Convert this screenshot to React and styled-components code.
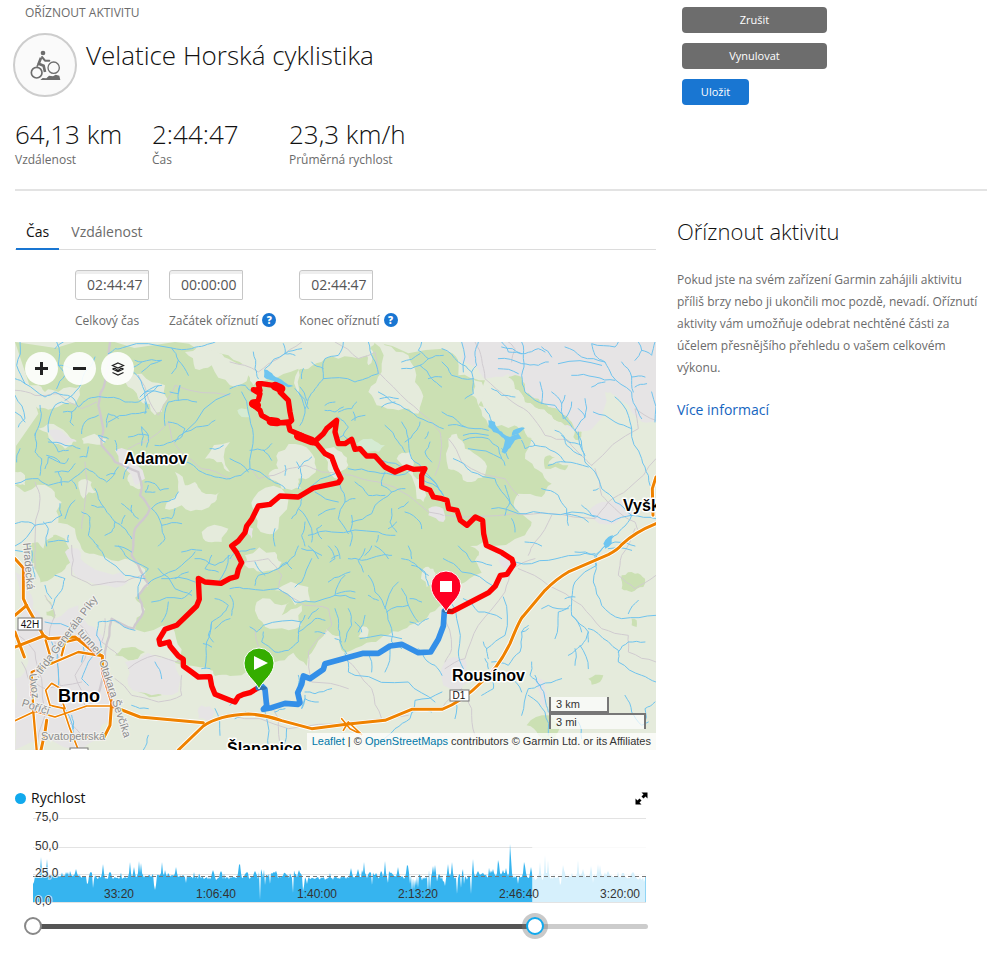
import { useState } from "react";
import styled, { createGlobalStyle } from "styled-components";

const GlobalStyle = createGlobalStyle`
  * { box-sizing: border-box; }
  body {
    margin: 0;
    background: #fff;
    color: #111;
    font-family: "Open Sans", "Noto Sans", sans-serif;
  }
  h1, h2, p, dl, dd { margin: 0; }
  button, input { font-family: inherit; }
`;

const Page = styled.div`
  padding: 4px 5px 12px 15px;
`;

const Columns = styled.div`
  display: grid;
  grid-template-columns: minmax(0, 1fr) 310px;
  column-gap: 21px;
`;

const Header = styled(Columns)`
  min-height: 187px;
  border-bottom: 2px solid #e3e3e3;
`;

const Eyebrow = styled.div`
  padding-left: 10px;
  font-size: 12px;
  line-height: 18px;
  color: #6b6b6b;
  text-transform: uppercase;
`;

const TitleRow = styled.div`
  display: flex;
  align-items: flex-start;
  gap: 9px;
  margin: 11px 0 0 -2px;
`;

const ActivityIcon = styled.span`
  display: grid;
  place-items: center;
  width: 64px;
  height: 64px;
  border: 2px solid #cdcdcd;
  border-radius: 50%;
  background: #fafafa;
  color: #6d6d6d;
`;

const Title = styled.h1`
  font-size: 26px;
  font-weight: 300;
  line-height: 36px;
  padding-top: 4px;
`;

const Stats = styled.dl`
  display: grid;
  grid-template-columns: repeat(3, 137px);
  margin-top: 19px;
`;

const Stat = styled.div`
  display: flex;
  flex-direction: column-reverse;
  white-space: nowrap;
  dt {
    font-size: 12px;
    line-height: 16px;
    color: #6b6b6b;
  }
  dd {
    font-size: 26px;
    font-weight: 300;
    line-height: 36px;
  }
`;

const Actions = styled.div`
  display: flex;
  flex-direction: column;
  align-items: flex-start;
  gap: 10px;
  padding: 3px 0 0 5px;
`;

const ActionButton = styled.button`
  width: ${({ $wide }) => ($wide ? "145px" : "67px")};
  height: 26px;
  padding: 0 0 2px;
  border: 0;
  border-radius: 4px;
  background: ${({ $primary }) => ($primary ? "#1976d2" : "#6d6d6d")};
  color: #fff;
  font-size: 11px;
  cursor: pointer;
`;

const Body = styled(Columns)`
  padding-top: 23px;
`;

const Tabs = styled.div`
  display: flex;
  gap: 2px;
  height: 36px;
  padding-left: 1px;
  border-bottom: 1px solid #dcdcdc;
`;

const Tab = styled.button`
  height: 36px;
  padding: 0 10px;
  border: 0;
  border-bottom: 2px solid ${({ $active }) => ($active ? "#1976d2" : "transparent")};
  background: none;
  color: ${({ $active }) => ($active ? "#111" : "#6b6b6b")};
  font-size: 14px;
  cursor: pointer;
`;

const Fields = styled.div`
  display: flex;
  gap: 20px;
  padding: 20px 0 13px 60px;
`;

const Field = styled.div`
  display: flex;
  flex-direction: column;
  gap: 11px;
`;

const TimeInput = styled.input`
  width: 74px;
  height: 30px;
  padding: 0 0 2px 11px;
  border: 1px solid #c6c6c6;
  border-radius: 3px 1px 1px 3px;
  box-shadow: inset 0 3px 0 #eee;
  color: #555;
  font-size: 14px;
`;

const FieldLabel = styled.div`
  display: flex;
  align-items: center;
  gap: 4px;
  height: 18px;
  color: #6b6b6b;
  font-size: 12px;
`;

const HelpButton = styled.button`
  width: 14px;
  height: 14px;
  padding: 0;
  border: 0;
  border-radius: 50%;
  background: #1976d2;
  color: #fff;
  font-size: 10px;
  font-weight: 800;
  line-height: 14px;
  margin-right: 3px;
`;

const MapFrame = styled.div`
  position: relative;
  overflow: hidden;
  background: #e5ebdc;
  > svg {
    display: block;
    width: 100%;
    height: auto;
  }
`;

const MapControls = styled.div`
  position: absolute;
  top: 10px;
  left: 10px;
  display: flex;
  gap: 5px;
`;

const MapButton = styled.button`
  display: grid;
  place-items: center;
  width: 33px;
  height: 33px;
  padding: 0;
  border: 0;
  border-radius: 50%;
  background: rgba(255, 255, 255, 0.9);
  color: #222;
`;

const MapScale = styled.div`
  position: absolute;
  right: 10px;
  bottom: 21px;
  display: flex;
  flex-direction: column;
  width: 97px;
  font: 11px/14px "Liberation Sans", Arial, sans-serif;
  color: #333;
`;

const ScaleLine = styled.div`
  width: ${({ $width }) => $width}px;
  height: 16px;
  padding-left: 5px;
  border: 2px solid #777;
  border-${({ $open }) => $open}: 0;
  background: rgba(255, 255, 255, 0.7);
`;

const Attribution = styled.div`
  position: absolute;
  right: 0;
  bottom: 0;
  padding: 0 5px;
  background: rgba(255, 255, 255, 0.75);
  color: #333;
  font: 11px/17px "Liberation Sans", Arial, sans-serif;
  white-space: nowrap;
  a {
    color: #0078a8;
    text-decoration: none;
  }
`;

const ChartHeader = styled.div`
  display: flex;
  align-items: center;
  gap: 5px;
  margin-top: 40px;
  font-size: 14px;
  line-height: 16px;
`;

const Dot = styled.span`
  width: 11px;
  height: 11px;
  border-radius: 50%;
  background: #11a9ed;
`;

const ExpandButton = styled.button`
  display: flex;
  margin: 0 8px 0 auto;
  padding: 0;
  border: 0;
  background: none;
`;

const ChartSvg = styled.svg`
  display: block;
  width: 100%;
  height: auto;
  font: 12px "Liberation Sans", Arial, sans-serif;
  fill: #333;
`;

const RangeSlider = styled.div`
  display: grid;
  align-items: center;
  height: 34px;
  margin: 1px -1px 0 9px;
`;

const RangeTrack = styled.div`
  grid-area: 1 / 1;
  height: 5px;
  margin: 0 9px;
  border-radius: 3px;
`;

const RangeInput = styled.input`
  grid-area: 1 / 1;
  width: 100%;
  height: 18px;
  margin: 0;
  background: none;
  appearance: none;
  pointer-events: none;
  &::-webkit-slider-thumb {
    appearance: none;
    width: 18px;
    height: 18px;
    border: 2px solid ${({ $active }) => ($active ? "#11a9ed" : "#888")};
    border-radius: 50%;
    background: #fff;
    box-shadow: ${({ $active }) => ($active ? "0 0 0 4px rgba(120, 120, 120, 0.4)" : "none")};
    pointer-events: auto;
  }
`;

const Aside = styled.aside`
  h2 {
    font-size: 22px;
    font-weight: 300;
    line-height: 34px;
  }
  p {
    margin-top: 21px;
    color: #6b6b6b;
    font-size: 12px;
    line-height: 22px;
  }
  a {
    display: inline-block;
    margin-top: 20px;
    color: #1565c0;
    font-size: 14px;
    line-height: 22px;
    text-decoration: none;
  }
`;

// small repeatable random source, so the terrain and chart look the same on every render
function randomSource(seed) {
  let s = seed;
  return () => {
    s = (s * 16807) % 2147483647;
    return s / 2147483647;
  };
}

// breaks straight edges into uneven ones, the way land cover looks on a map
function rough(text, amount, closed) {
  let pts = text.trim().split(/\s+/).map((p) => p.split(",").map(Number));
  const rnd = randomSource(text.length * 97 + Math.abs(pts[0][0]) + 11);
  let spread = amount;
  for (let pass = 0; pass < 2; pass++) {
    const next = [];
    pts.forEach((p, i) => {
      next.push(p);
      const q = pts[i + 1] || (closed ? pts[0] : null);
      if (!q) return;
      const len = Math.hypot(q[0] - p[0], q[1] - p[1]);
      if (len < 14) return;
      const d = (rnd() - 0.5) * len * spread;
      next.push([
        (p[0] + q[0]) / 2 - ((q[1] - p[1]) / len) * d,
        (p[1] + q[1]) / 2 + ((q[0] - p[0]) / len) * d,
      ]);
    });
    pts = next;
    spread = amount * 0.9;
  }
  return "M" + pts.map(([x, y]) => `${Math.round(x)},${Math.round(y)}`).join("L") + (closed ? "Z" : "");
}

const forests = [
  "0,0 480,0 640,40 700,90 860,75 940,40 985,5 1060,30 1080,0 1285,20 1330,55 1345,90 1410,115 1390,170 1405,205 1430,235 1480,245 1525,255 1550,290 1530,350 1570,385 1610,425 1580,465 1510,455 1500,500 1550,540 1530,580 1410,612 1380,655 1400,692 1355,717 1325,742 1290,770 1245,812 1205,842 1165,862 1105,882 1055,902 990,932 975,882 935,862 890,932 875,972 835,932 775,962 645,1002 600,1002 580,977 480,962 500,922 470,852 360,862 390,802 360,767 400,732 390,682 330,650 250,640 200,620 180,560 90,510 60,450 0,430",
  "40,605 150,590 170,650 140,690 80,720 50,740 30,700",
  "1480,105 1520,105 1530,150 1570,170 1600,195 1640,215 1670,240 1680,262 1650,250 1610,220 1560,195 1530,180 1500,140",
  "1680,262 1700,270 1690,295 1675,285",
  "1820,700 1860,695 1890,710 1885,735 1850,750 1820,740",
  "1535,1150 1600,1120 1640,1150 1620,1190 1570,1180",
  "1720,1010 1765,1000 1755,1020 1730,1028",
  "1590,345 1620,345 1600,365 1660,370 1650,385 1590,380",
  "300,940 350,915 390,930 340,955",
  "350,1010 420,1030 440,1060 370,1050",
  "1850,830 1865,835 1865,855 1850,850",
  "1820,60 1860,65 1900,110 1870,100",
  "90,770 110,790 120,830 95,820",
  "20,850 70,890 40,900",
  "1765,130 1800,125 1855,165 1830,160",
  "1910,150 1923,150 1923,190 1912,190",
];

const clearings = [
  "510,30 600,25 640,50 760,40 860,5 1060,0 1075,30 1060,70 1055,40 1010,45 930,50 880,80 850,85 850,160 850,80 760,110 715,130 700,100 645,130 590,70 540,80",
  "0,130 60,130 90,150 130,150 200,130 180,185 110,200 70,200 0,160",
  "330,120 380,95 450,130 440,210 420,220 370,170",
  "1075,0 1110,10 1180,40 1200,120 1220,180 1210,215 1150,205 1085,190 1060,150 1100,90",
  "1285,0 1340,60 1370,160 1390,190 1440,230 1500,230 1520,250 1550,290 1530,260 1500,250 1420,250 1390,190 1400,120 1330,100",
  "70,260 130,255 185,295 150,320 110,300",
  "200,290 275,292 260,308 205,305",
  "480,390 510,430 540,420 560,450 615,450 600,480 560,505 500,490 450,500 470,470 490,450",
  "570,350 645,300 645,390 620,360",
  "340,400 375,400 380,440 345,430",
  "790,330 860,310 900,350 890,400 850,410 860,440 800,440 760,400 790,380",
  "715,470 800,440 790,560 755,575 720,520",
  "930,320 980,330 1000,370 970,410 950,400",
  "1145,350 1185,330 1195,400 1230,440 1225,480 1205,470",
  "1300,290 1325,275 1350,320 1400,350 1410,400 1370,420 1330,390 1300,380",
  "0,390 30,400 30,430 0,430",
  "190,420 230,420 245,450 205,470",
  "30,450 110,440 140,480 130,540 85,620 50,590",
  "780,745 880,735 885,780 840,790",
  "725,780 800,790 825,780 800,820 860,790 860,850 780,860 730,830",
  "690,640 780,630 800,660 740,690 690,670",
  "1035,860 1055,855 1055,890 1030,885",
  "1225,680 1255,680 1260,710 1235,735",
  "1365,612 1440,620 1480,650 1450,690 1400,660",
  "560,570 640,560 620,600 580,600",
  "0,590 30,620 120,800 40,780 0,720",
];

const towns = [
  "1340,0 1923,0 1923,240 1870,230 1800,160 1770,150 1740,250 1690,270 1630,215 1570,190 1520,150 1480,95 1410,110 1390,80 1340,60",
  "0,690 50,760 80,830 190,790 220,850 270,900 250,930 280,1000 300,1080 260,1150 200,1224 0,1224 0,1010 40,960 0,870",
  "330,960 470,950 500,1010 490,1050 410,1060 340,1030",
  "150,630 190,620 220,670 320,690 340,720 260,730 180,700",
  "100,265 170,290 185,300 150,310",
  "300,325 340,325 390,410 360,430 340,390",
  "1720,510 1780,480 1830,470 1860,520 1800,545 1740,535",
  "1290,960 1350,950 1370,1010 1330,1060 1285,1030",
  "1450,650 1490,640 1510,665 1470,680",
  "1560,1010 1590,1020 1590,1100 1575,1080",
  "690,560 715,560 710,590",
  "1240,500 1285,500 1285,540 1240,520",
  "560,1090 600,1110 590,1140 550,1130",
];

const grayRoads = [
  "285,0 270,120 250,190 265,260 260,310 300,360 370,390 380,430 375,460 405,500 360,560 355,612 350,640 385,700 400,725 370,760 385,810 355,860 290,830 270,930 240,1080",
  "0,145 60,160 130,155 200,200 245,180",
  "370,100 400,170 430,220 445,190 480,130 645,160",
  "340,320 390,300 460,240 470,290 500,330 560,380 645,410",
  "645,60 730,90 790,50 860,0",
  "960,0 1030,50 1080,30 1090,90 1180,180 1240,230 1275,270 1280,310 1260,400",
  "705,380 730,410 820,380 870,370 920,390 1010,400 1090,420 1180,460 1240,510 1285,520",
  "1380,0 1400,50 1410,110 1480,170 1540,210 1590,280 1660,295 1710,350 1730,370",
  "1923,350 1840,440 1780,480 1740,530 1610,515 1500,515 1290,520",
  "1730,370 1870,260 1860,200 1923,235",
  "1300,290 1340,360 1400,395 1470,410 1510,460",
  "60,420 75,470 60,600 60,680",
  "210,360 210,480 200,560",
  "170,610 170,700 230,730 330,720 380,700",
  "90,760 120,820 100,900",
  "270,830 260,900 310,940",
  "340,980 420,940 500,960 530,990",
  "300,1010 350,1060 430,1080 500,1060 500,1000",
  "645,650 690,660 760,650 800,700 790,740 870,790 940,800 950,850 880,930 890,1020 1000,1040",
  "720,860 730,980 740,1040 790,1130 800,1224",
  "990,950 1030,990 1070,1040 1100,1130",
  "1290,980 1350,950 1390,850 1470,750 1490,680 1560,650",
  "1510,680 1600,730 1700,790 1760,860 1840,880 1840,930 1923,960",
  "1480,0 1500,20 1490,60",
  "1285,810 1310,920 1290,960",
  "1280,1100 1340,1040 1370,1100 1380,1180",
  "645,1120 820,1160 1000,1140 1180,1120",
  "20,960 40,1010 90,1040 200,1020",
  "10,880 60,930 80,1010 90,1120 60,1224",
  "120,900 130,1000 140,1100 200,1180",
  "180,830 230,900 180,1000 210,1100",
  "1740,380 1760,460 1800,500 1860,540 1870,570",
  "1860,560 1820,640 1810,700 1860,740 1923,700",
  "1610,520 1560,600 1540,640",
];

const streams = [
  // north-west
  "0,110 30,125 90,165 120,150 170,165 190,195 220,170 260,165 330,180 370,180 430,130",
  "15,0 5,70 30,125", "125,0 130,70 150,100 125,140", "130,70 170,80 190,70", "120,20 145,0",
  "240,45 210,90 180,150 150,175", "330,15 300,20 280,35", "330,15 470,18 530,20 570,10 600,0",
  "470,18 490,55 520,100", "490,55 470,95", "380,60 360,55", "380,90 440,55 380,60 350,80",
  "355,90 390,150 400,200", "390,150 450,155", "375,165 440,130", "0,160 30,230 10,255", "0,210 30,240",
  "75,190 75,240 60,280", "100,270 120,190 140,180 160,185", "145,210 170,210 185,195", "170,210 165,240 175,250",
  "200,275 210,240 250,220", "275,255 280,215 310,230", "280,240 350,215 395,210", "390,180 390,215",
  "450,250 460,180 490,175 495,130 490,155 465,150", "490,175 545,180", "460,240 510,260 500,285 470,300 420,310",
  "480,300 510,270 580,250 600,235", "510,270 645,155", "340,285 400,280 380,255", "380,255 380,310", "400,280 395,315",
  "270,300 250,280 280,290", "100,300 150,310 195,320", "100,290 130,330 160,325", "195,345 215,345 220,315",
  "300,295 305,325", "5,360 15,320", "60,275 60,330 80,350 75,400", "95,340 135,360", "160,350 150,365 100,345 90,380",
  "120,390 160,390 180,365", "0,425 70,410 100,430 160,420 180,405 210,380", "130,390 140,430", "170,415 185,440",
  "215,380 250,405 275,420 310,375", "275,400 300,395", "325,410 340,375", "390,420 420,425 435,445 460,440",
  "410,500 440,480 480,470 490,450", "400,430 390,450 420,450", "240,440 250,470 270,500 300,540 330,560 350,590",
  "265,495 230,490", "300,540 290,570 270,580", "320,545 330,520", "370,530 350,510 320,485", "350,510 350,490",
  "200,510 225,525 220,580 250,612", "410,500 440,550 450,590 430,612", "440,530 470,530 480,500", "440,550 500,545",
  "0,545 40,540 60,550 110,540 140,520", "60,550 0,612", "95,612 100,560 85,540", "140,520 135,485", "150,530 180,475",
  "100,600 160,600 160,580", "585,320 600,322 625,310", "515,360 550,385 600,405 645,410",
  // north centre
  "715,30 720,80 730,110", "750,80 810,35 860,20", "805,5 810,35", "810,35 840,40", "645,140 690,130 710,150",
  "680,150 700,210 715,280 705,380 645,410", "705,325 750,325 770,305", "745,325 770,355", "705,380 760,410 800,430 810,440",
  "985,0 970,40 930,50 925,110 900,140 880,170 870,200 855,250", "925,80 890,60", "925,110 1020,120 1050,110 1090,95 1075,50 1060,0",
  "860,110 865,80", "840,140 870,200", "850,150 880,200", "855,135 875,175", "930,205 960,210 985,195", "930,190 960,180",
  "970,210 1010,200 1025,180", "1015,210 1020,235", "1010,235 1050,220", "970,225 1000,255 985,280 1030,320 1100,355 1180,380",
  "985,280 960,290", "1220,0 1210,25 1240,50 1215,70 1250,110 1280,135", "1215,35 1160,60", "1240,50 1285,40", "1215,70 1160,80", "1240,110 1280,105",
  "1090,150 1130,180 1180,205 1240,240 1285,260", "1095,170 1150,170", "1100,195 1140,180", "1110,250 1150,300 1170,330",
  "1160,240 1180,290 1190,350", "1215,240 1200,270 1170,300", "1240,270 1230,290", "1245,300 1230,330 1250,360",
  "1190,350 1230,390 1260,420 1285,460", "1190,385 1150,400 1080,390 1000,380", "1100,430 1130,450 1080,490 1070,515 1010,540",
  "1020,420 1060,460 1110,460", "1100,430 1110,390", "1130,450 1170,440", "845,360 860,400 850,440", "850,380 890,345", "880,440 960,395",
  "810,370 810,400", "645,350 700,390", "975,430 990,480 970,530 1000,575", "990,480 1020,470", "970,480 900,450", "910,520 960,500",
  "860,470 850,500 890,560 890,600", "850,500 830,530", "880,580 950,570 1090,570 1140,580", "920,590 905,560 920,550",
  "780,612 780,560", "870,540 860,580 870,612", "1010,520 1005,570", "1010,570 1005,612", "1130,500 1125,540 1145,570", "1090,580 1085,600",
  "1170,510 1215,540 1220,560", "1180,480 1150,500", "1230,400 1285,460", "1220,412 1280,450", "1145,540 1120,560",
  // north-east
  "1281,20 1330,60 1370,90 1375,155 1350,170", "1340,0 1345,90", "1281,60 1310,100 1375,110", "1370,90 1385,70 1380,30 1390,0",
  "1460,0 1480,30 1530,35 1570,20 1590,30", "1520,0 1525,50 1520,100 1530,150 1560,175 1620,190 1650,230 1680,265",
  "1450,50 1520,65 1570,70 1600,60", "1450,80 1510,95", "1580,15 1610,45", "1460,15 1520,35", "1430,140 1460,160 1500,165",
  "1575,120 1580,185", "1610,150 1640,185 1645,230", "1650,160 1640,185", "1670,180 1650,230", "1710,170 1710,225 1690,250 1680,265",
  "1690,200 1710,225", "1650,15 1700,45 1770,60 1790,100 1850,150 1870,210 1880,230", "1770,60 1740,40 1730,5 1800,15 1810,0",
  "1630,65 1760,70", "1670,100 1740,105 1800,115", "1730,135 1770,120", "1820,60 1850,105 1855,150", "1850,105 1890,105", "1860,135 1895,125",
  "1870,0 1880,25 1860,55", "1880,25 1910,40 1920,0", "1910,150 1920,240", "1800,165 1840,220 1850,260 1880,350 1900,400 1905,430",
  "1735,210 1800,240 1850,260", "1680,265 1700,310 1710,360 1740,390 1760,440 1800,480 1850,520 1923,530",
  "1620,265 1660,300 1700,310", "1640,280 1655,310 1700,340", "1560,310 1620,330 1650,360 1720,375", "1600,370 1650,360",
  "1710,340 1690,270", "1750,440 1735,445", "1550,295 1560,310 1530,320 1520,295", "1281,210 1340,250 1420,265", "1300,250 1350,255",
  "1345,280 1420,280", "1345,295 1420,290 1450,315 1460,350", "1360,320 1460,350 1470,370", "1460,320 1480,350",
  "1315,350 1370,390 1440,410 1470,460 1510,510", "1410,200 1430,240", "1580,440 1630,460 1655,500 1660,550", "1430,500 1510,515 1600,515 1740,525",
  "1490,530 1500,570", "1470,520 1485,480 1470,430", "1650,515 1720,540", "1700,490 1730,520 1790,540 1850,520", "1530,600 1580,612",
  "1850,520 1820,560 1790,590 1770,612 1745,640 1745,670 1680,720 1670,770 1670,820 1720,870 1720,900",
  // south-west
  "45,612 50,660 60,710", "0,625 45,640", "110,800 140,745 150,710 120,700", "110,770 90,730", "370,770 380,700 400,680 330,640 310,612",
  "400,725 420,710 500,670 540,630", "360,865 300,835 250,840 245,880", "90,840 180,865", "245,880 260,920 220,960 200,1010 220,1030", "205,900 200,960",
  "245,612 270,650 330,700 390,710", "300,612 350,630", "430,680 480,740 530,760", "440,710 540,720", "410,780 500,770 530,745", "460,780 440,840",
  "480,710 520,690", "540,650 600,670 645,640", "500,630 560,625", "590,640 570,680 610,690", "640,640 610,720",
  "600,770 640,790 620,820 590,840 575,900 570,980", "590,840 580,880 595,900", "565,905 590,915", "560,980 585,980", "600,860 645,830",
  "110,900 130,980 150,1100 180,1200", "420,960 440,1010", "400,1100 350,1090", "600,1100 615,1180", "400,1180 385,1224", "170,1120 175,1160",
  // south centre
  "645,650 665,630 720,620", "645,740 700,740 790,740 840,780 900,780 960,760 1020,770", "720,730 730,700 790,680 840,640 850,612",
  "790,680 815,660 830,680", "750,700 720,660", "840,735 860,720 890,650", "645,760 655,790 650,820", "940,720 980,700 1005,690",
  "960,760 990,700", "965,755 1020,750", "860,620 920,640", "880,612 910,650", "940,612 960,650 945,660", "950,650 970,640", "960,612 975,650",
  "1000,650 1040,655 1100,640 1130,640", "1050,620 1030,655 1045,690", "1070,612 1050,640", "1080,612 1120,650",
  "1060,700 1080,750 1115,805 1130,860 1130,900 1160,920", "1110,800 1150,720", "1090,775 1060,760", "1115,810 1180,790",
  "1160,650 1200,665 1240,700", "1180,612 1190,650", "1190,670 1230,690 1240,730", "1160,740 1180,790 1210,840", "1185,770 1220,780", "1185,840 1210,850 1240,830",
  "1035,890 1160,890", "960,800 970,860 975,900 995,935", "1000,800 1010,850 990,900", "960,890 980,900", "1050,820 1030,870", "1020,840 1040,870",
  "990,935 1000,990 1020,1000 1180,1020 1260,1080", "705,855 725,870 745,850 860,840", "745,870 740,900 780,930 820,925 850,900 850,870 900,830 930,835",
  "900,870 930,875", "880,830 910,800", "850,870 870,820", "1060,930 1070,990", "1125,920 1110,990", "1210,920 1230,950 1260,970 1281,1000",
  "870,1050 900,1055 950,1040", "870,1060 860,1100 870,1070 910,1080", "745,1030 750,1110 760,1224", "690,1110 660,1130", "645,1090 690,1060",
  "850,1000 850,1030", "1281,1050 1200,1075 1185,1130 1140,1160 1100,1200", "1190,1110 1250,1110", "780,1110 810,1100", "815,1160 805,1210",
  // south-east
  "1285,650 1340,690 1440,735 1455,705", "1330,612 1370,660 1430,670", "1300,770 1325,830 1330,930 1345,980", "1345,770 1390,810 1460,830",
  "1465,765 1470,880 1415,920 1420,950", "1460,640 1500,660 1600,655 1680,640 1740,635", "1680,630 1740,640 1800,600 1860,612", "1740,640 1735,720 1760,790 1820,830 1923,820",
  "1840,815 1870,775", "1780,620 1850,625", "1650,770 1680,765", "1665,790 1630,810 1620,890", "1660,800 1600,790 1580,800",
  "1720,870 1700,910 1660,940", "1680,920 1680,970", "1695,910 1720,980", "1720,860 1750,875 1810,925 1810,960 1880,1000 1923,1020",
  "1810,930 1840,900 1890,900", "1670,820 1700,870", "1540,860 1520,870 1515,930 1480,970 1430,960", "1520,870 1540,850",
  "1415,920 1405,900", "1410,950 1420,980", "1550,960 1545,1000 1575,1030 1640,1010", "1575,1030 1540,1040 1520,1120", "1575,1030 1560,1000",
  "1575,1030 1590,1070 1600,1110", "1540,1060 1590,1110 1600,1180", "1480,1000 1520,1050", "1430,1010 1435,1040 1400,1060",
  "1320,1060 1320,1130", "1830,1060 1850,1110 1880,1150 1900,1140", "1690,1140 1700,1190", "1920,1080 1890,1100 1890,1150",
];

const lakes = [
  "747,82 765,90 775,100 790,108 808,120 820,128 835,132 820,136 790,125 760,112 747,105",
  "1420,235 1440,240 1445,255 1465,275 1485,285 1510,275 1520,290 1500,295 1490,310 1470,335 1460,330 1470,295 1450,275 1435,270 1420,255",
  "1490,282 1495,265 1530,258 1510,275",
  "1780,585 1795,580 1790,605 1770,620 1765,605",
];

const highways = [
  { w: 9, d: "M0,650 L25,678 L25,770 L35,792 L85,880 L100,890 L180,885 L230,925 L262,942 L262,990 L290,1080 L285,1150 L265,1190 L230,1188 L175,1182" },
  { w: 9, d: "M0,820 L35,790 M0,915 L85,882 M0,870 L28,945" },
  { w: 7, d: "M262,942 L190,930 L50,990 L55,1110 L65,1224 M92,895 L105,940 L110,965 M140,940 L150,900 L195,890" },
  { w: 5, d: "M50,1005 L48,1060 M110,1024 L138,1040 L135,1060 L150,1100 L105,1090 L92,1045 L110,1024 M145,1100 L165,1160 L190,1224 M0,1136 L60,1108 L120,1125 L215,1092 L290,1092" },
  { w: 9, d: "M290,1092 L375,1125 L565,1142 M95,1135 L90,1170 L78,1224" },
  { w: 9, d: "M490,1224 L565,1152 Q610,1120 700,1116 Q750,1118 800,1136 L890,1160 L1000,1146 L1110,1135 L1190,1102 L1281,1102 Q1340,1080 1400,1020 Q1445,985 1485,905 Q1515,830 1525,822 L1590,745 Q1625,710 1660,690 L1780,638 Q1810,622 1820,608 Q1860,570 1923,545" },
  { w: 5, d: "M980,1130 L1005,1160 L1035,1175 M985,1165 L1000,1140 L1040,1178" },
  { w: 9, d: "M1923,405 L1912,440 L1914,520" },
];

const trimmedRoute =
  "M730,1037 L705,1052 L685,1057 L670,1064 L660,1080 L645,1075 L600,1057 L590,1032 L585,1004 L550,1005 L530,990 L505,972 L505,952 L490,942 L465,912 L462,900 L435,907 L432,892 L450,862 L485,850 L545,792 L553,772 L550,709 L570,720 L618,724 L645,709 L665,704 L670,682 L680,662 L665,632 L650,612 L670,597 L690,572 L695,552 L710,532 L730,492 L765,487 L795,462 L850,465 L895,438 L970,422 L978,410 L963,380 L950,345 L930,335 L905,305 L880,295 L860,280 L825,265 L820,245 L830,235 L825,210 L820,175 L795,150 L795,135 L775,130 L740,125 L730,125 L735,145 L715,143 L735,155 L730,175 L710,185 L735,205 L740,220 L775,240 L790,243 L820,240 M895,302 L925,275 L935,260 L965,235 L960,270 L970,305 L990,305 L1010,292 L1020,322 L1035,320 L1055,342 L1080,342 L1110,375 L1140,390 L1175,375 L1195,382 L1230,380 L1220,400 L1220,435 L1245,445 L1255,465 L1281,470 L1296,475 L1301,500 L1326,505 L1336,535 L1356,550 L1381,525 L1403,535 L1406,575 L1414,610 L1461,632 L1491,652 L1496,667 L1476,697 L1456,700 L1441,732 L1421,752 L1311,809 L1290,807";

const keptRoute =
  "M1288,807 L1285,852 L1270,892 L1247,930 L1210,932 L1160,907 L1125,912 L1090,934 L1045,934 L930,965 L925,982 L885,1010 L865,1002 L860,1027 L848,1052 L855,1082 L850,1087 L810,1084 L770,1097 L745,1102 L755,1092 L750,1042 L740,1032 L730,1037";

const streetNames = [
  { x: 8, y: 201, turn: 85, name: "Hradecká" },
  { x: 26, y: 333, turn: -53, name: "třída Generála Píky" },
  { x: 62, y: 291, turn: 48, name: "tunnel" },
  { x: 84, y: 319, turn: 72, name: "Otakara Ševčíka" },
  { x: 14, y: 332, turn: 83, name: "Úvoz" },
  { x: 6, y: 364, turn: 18, name: "Poříčí" },
  { x: 26, y: 398, turn: 0, name: "Svatopetrská" },
];

const cities = [
  { x: 109, y: 122, size: 16, name: "Adamov" },
  { x: 43, y: 360, size: 18, name: "Brno" },
  { x: 437, y: 339, size: 16, name: "Rousínov" },
  { x: 608, y: 169, size: 16, name: "Vyškov" },
  { x: 212, y: 412, size: 16, name: "Šlapanice" },
];

const Pin = ({ x, y, color, children }) => (
  <g transform={`translate(${x} ${y})`}>
    <ellipse cx="2" cy="24" rx="6" ry="2" fill="#333" opacity="0.3" />
    <path
      d="M0,25 C-4,16 -15,11 -15,-1 A15,15 0 0 1 15,-1 C15,11 4,16 0,25Z"
      fill={color}
      stroke="#fff"
      strokeWidth="1"
    />
    {children}
  </g>
);

const TerrainMap = () => (
  <svg viewBox="0 0 641 408" role="img" aria-label="Mapa aktivity">
    <g transform="scale(0.33333)" fill="none" strokeLinejoin="round" strokeLinecap="round">
      <g fill="#cbe0b3">
        {forests.map((p) => <path key={p} d={rough(p, 0.35, true)} />)}
      </g>
      <g fill="#e5ebdc">
        {clearings.map((p) => <path key={p} d={rough(p, 0.45, true)} />)}
      </g>
      <g fill="#e6e4e5">
        {towns.map((p) => <path key={p} d={rough(p, 0.35, true)} />)}
      </g>
      <path d={rough(forests[2], 0.35, true)} fill="#cbe0b3" />
      <path d={rough("1025,305 1070,290 1110,310 1090,330 1050,330", 0.3, true)} fill="#d5ebd2" />
      <path d={rough("667,205 695,200 705,225 680,225", 0.3, true)} fill="#d5ebd2" />
      <g stroke="#d0cbd0" strokeWidth="3">
        {grayRoads.map((p) => <path key={p} d={rough(p, 0.12)} />)}
      </g>
      <path d={rough(grayRoads[0], 0.12)} stroke="#cfc9cf" strokeWidth="7" />
      <g stroke="#6ec3ee" strokeWidth="3">
        {streams.map((p) => <path key={p} d={rough(p, 0.18)} />)}
      </g>
      <g fill="#6ec5f0">
        {lakes.map((p) => <path key={p} d={rough(p, 0.2, true)} />)}
      </g>
      {highways.map(({ d, w }) => <path key={d} d={d} stroke="#fff" strokeWidth={w + 5} />)}
      {highways.map(({ d, w }) => <path key={d} d={d} stroke="#ef8200" strokeWidth={w} />)}
    </g>
    <g fill="#8c8c8c" stroke="#f1f1ee" strokeWidth="2" paintOrder="stroke" fontFamily="Liberation Sans, Arial, sans-serif" fontSize="11">
      {streetNames.map(({ x, y, turn, name }) => (
        <text key={name} transform={`translate(${x} ${y}) rotate(${turn})`}>{name}</text>
      ))}
    </g>
    <g fontFamily="Liberation Sans, Arial, sans-serif" fontSize="10" fill="#111">
      <rect x="3" y="276" width="24" height="12" fill="#fff" stroke="#777" />
      <text x="15" y="286" textAnchor="middle">42H</text>
      <rect x="435" y="348" width="19" height="11" fill="#fff" stroke="#777" />
      <text x="444" y="357" textAnchor="middle">D1</text>
      <rect x="55" y="406" width="18" height="11" fill="#fff" stroke="#777" />
    </g>
    <g transform="scale(0.33333)" fill="none" strokeLinejoin="round" strokeLinecap="round" strokeWidth="16">
      <path d={trimmedRoute} stroke="#f00" />
      <path d="M780,132 L798,140 M850,282 L890,297 M715,185 L725,190 M768,238 L785,240" stroke="#f00" strokeWidth="26" />
      <path d={keptRoute} stroke="#338fe8" strokeWidth="17" />
    </g>
    <g fontFamily="Liberation Sans, Arial, sans-serif" fontWeight="700" fill="#000" stroke="#fff" strokeWidth="3" strokeLinejoin="round" paintOrder="stroke">
      {cities.map(({ x, y, size, name }) => (
        <text key={name} x={x} y={y} fontSize={size}>{name}</text>
      ))}
    </g>
    <Pin x={244} y={322} color="#35ad00">
      <path d="M-5,-8 L9,-1 L-5,6Z" fill="#fff" />
    </Pin>
    <Pin x={431} y={245} color="#ff0024">
      <rect x="-6" y="-6" width="12" height="11" fill="#fff" />
    </Pin>
  </svg>
);

// height in chart pixels at a given x (0 is the bottom axis)
const spikes = {
  8: 45, 14: 43, 43: 33, 58: 30, 70: 38, 77: 30, 97: 40, 101: 35, 106: 41, 108: 39, 129: 40, 143: 35, 180: 32, 188: 31,
  206: 37, 207: 38, 214: 30, 222: 31, 228: 33, 241: 30, 266: 32, 318: 34, 325: 33, 331: 40, 337: 30, 352: 41, 356: 31, 365: 35,
  374: 37, 375: 36, 396: 32, 400: 36, 402: 37, 415: 38, 419: 40, 430: 33, 440: 43, 445: 31, 460: 33, 465: 42, 466: 38,
  470: 32, 473: 34, 477: 58, 478: 44, 491: 40, 492: 36, 498: 35, 507: 40, 512: 47, 515: 42, 530: 37, 531: 32,
  545: 42, 550: 33, 558: 36, 565: 38, 567: 37, 575: 31, 590: 29, 600: 30,
};
const dips = {
  0: 18, 1: 20, 54: 18, 55: 19, 60: 14, 121: 17, 122: 12, 123: 17, 153: 19, 227: 2, 232: 17, 237: 18, 260: 9, 270: 11,
  271: 16, 274: 18, 339: 17, 355: 19, 377: 18, 379: 10, 381: 12, 383: 16, 385: 14, 395: 9, 397: 12, 412: 16, 424: 8,
  428: 14, 431: 18, 438: 8, 485: 18, 527: 17, 528: 19, 560: 19, 611: 20,
};

function speedPath() {
  const rnd = randomSource(4217);
  let d = "M0,84";
  for (let x = 0; x <= 612; x++) {
    const wild = (x > 210 && x < 275) || (x > 330 && x < 460) ? 7 : 3;
    let h = 25 + Math.sin(x / 17) * 1.5 + (rnd() - 0.5) * wild;
    if (rnd() > 0.9) h += rnd() * 6;
    if (spikes[x]) h = spikes[x];
    if (spikes[x + 1] || spikes[x - 1]) h = Math.max(h, 29);
    if (dips[x]) h = dips[x];
    d += `L${x},${(84 - h).toFixed(1)}`;
  }
  return d + "L612,84Z";
}

const yTicks = [
  { y: 12, label: "75,0" },
  { y: 41, label: "50,0" },
  { y: 68, label: "25,0" },
  { y: 96, label: "0,0" },
];
const xTicks = [
  { x: 104, label: "33:20" },
  { x: 201, label: "1:06:40" },
  { x: 302, label: "1:40:00" },
  { x: 403, label: "2:13:20" },
  { x: 504, label: "2:46:40" },
  { x: 605, label: "3:20:00" },
];

const SpeedChart = ({ share }) => {
  const cut = 17 + share * 613;
  return (
    <ChartSvg viewBox="0 0 641 102" role="img" aria-label="Graf rychlosti">
      {yTicks.map(({ y, label }) => (
        <path key={label} d={`M18,${y + 0.5}H631`} stroke="#e3e3e3" />
      ))}
      <path transform="translate(18 12)" d={speedPath()} fill="#36b4ef" />
      <rect x={cut} y="30" width={631 - cut} height="66" fill="#fff" opacity="0.8" />
      <path d="M630.5,70V96" stroke="#8fd5f5" />
      <path d="M18,70.5H631" stroke="#777" strokeDasharray="4 3" />
      <g stroke="#fff" strokeOpacity="0.7" strokeWidth="2" paintOrder="stroke">
        {yTicks.map(({ y, label }) => (
          <text key={label} x="20" y={y + 3}>{label}</text>
        ))}
      </g>
      <g textAnchor="middle">
        {xTicks.map(({ x, label }) => (
          <text key={label} x={x} y="92">{label}</text>
        ))}
      </g>
    </ChartSvg>
  );
};

const MountainBike = () => (
  <svg width="31" height="31" viewBox="89 145 93 93" fill="none" stroke="currentColor" aria-hidden="true">
    <circle cx="128" cy="154" r="7" fill="currentColor" stroke="none" />
    <circle cx="109" cy="213" r="16" strokeWidth="5" />
    <circle cx="160" cy="198" r="17" strokeWidth="4" />
    <path d="M122,168 L115,186 L130,192 L134,211" strokeWidth="8" strokeLinejoin="round" />
    <path d="M125,166 L134,177 L147,177" strokeWidth="6" strokeLinecap="round" strokeLinejoin="round" />
    <path d="M115,185 L110,195" strokeWidth="5" />
    <path d="M120,235 L127,229 L138,230 L146,222 L158,224 L166,219 L177,222 L180,235Z" fill="currentColor" stroke="none" />
  </svg>
);

const timeFields = [
  { id: "total", label: "Celkový čas", value: "02:44:47" },
  { id: "start", label: "Začátek oříznutí", value: "00:00:00", help: true },
  { id: "end", label: "Konec oříznutí", value: "02:44:47", help: true },
];

export default function App() {
  const [tab, setTab] = useState("Čas");
  const [start, setStart] = useState(0);
  const [end, setEnd] = useState(816);

  return (
    <Page>
      <GlobalStyle />
      <Header as="header">
        <div>
          <Eyebrow>Oříznout aktivitu</Eyebrow>
          <TitleRow>
            <ActivityIcon><MountainBike /></ActivityIcon>
            <Title>Velatice Horská cyklistika</Title>
          </TitleRow>
          <Stats>
            <Stat><dt>Vzdálenost</dt><dd>64,13 km</dd></Stat>
            <Stat><dt>Čas</dt><dd>2:44:47</dd></Stat>
            <Stat><dt>Průměrná rychlost</dt><dd>23,3 km/h</dd></Stat>
          </Stats>
        </div>
        <Actions>
          <ActionButton type="button" $wide>Zrušit</ActionButton>
          <ActionButton type="button" $wide>Vynulovat</ActionButton>
          <ActionButton type="button" $primary>Uložit</ActionButton>
        </Actions>
      </Header>

      <Body as="main">
        <section>
          <Tabs role="tablist">
            {["Čas", "Vzdálenost"].map((name) => (
              <Tab key={name} type="button" role="tab" aria-selected={tab === name} $active={tab === name} onClick={() => setTab(name)}>
                {name}
              </Tab>
            ))}
          </Tabs>
          <Fields>
            {timeFields.map(({ id, label, value, help }) => (
              <Field key={id}>
                <TimeInput id={id} type="text" defaultValue={value} />
                <FieldLabel>
                  <label htmlFor={id}>{label}</label>
                  {help && <HelpButton type="button" aria-label={`Nápověda: ${label}`}>?</HelpButton>}
                </FieldLabel>
              </Field>
            ))}
          </Fields>

          <MapFrame>
            <TerrainMap />
            <MapControls>
              <MapButton type="button" aria-label="Přiblížit">
                <svg width="15" height="15" viewBox="0 0 15 15"><path d="M1,7.5H14M7.5,1V14" stroke="currentColor" strokeWidth="3" /></svg>
              </MapButton>
              <MapButton type="button" aria-label="Oddálit">
                <svg width="15" height="15" viewBox="0 0 15 15"><path d="M1,7.5H14" stroke="currentColor" strokeWidth="3" /></svg>
              </MapButton>
              <MapButton type="button" aria-label="Vrstvy">
                <svg width="14" height="14" viewBox="0 0 14 14" fill="none" stroke="currentColor" strokeWidth="1.2">
                  <path d="M7,1 L12.5,3.5 L7,6 L1.5,3.5Z M1.5,6.5 L4,6.3 L7,8.5 L10,6.3 L12.5,6.5 M1.5,7 L7,9.5 L12.5,7 M1.5,10.5 L7,13 L12.5,10.5" />
                </svg>
              </MapButton>
            </MapControls>
            <MapScale>
              <ScaleLine $width={60} $open="top">3 km</ScaleLine>
              <ScaleLine $width={97} $open="bottom">3 mi</ScaleLine>
            </MapScale>
            <Attribution>
              <a href="#leaflet">Leaflet</a> | © <a href="#osm">OpenStreetMaps</a> contributors © Garmin Ltd. or its Affiliates
            </Attribution>
          </MapFrame>

          <ChartHeader>
            <Dot />
            Rychlost
            <ExpandButton type="button" aria-label="Zvětšit graf">
              <svg width="13" height="13" viewBox="0 0 13 13">
                <path d="M6.5,0.5H12.5V6.5L10.5,4.5L8.5,6.5L6.5,4.5L8.5,2.5Z M0.5,6.5L2.5,8.5L4.5,6.5L6.5,8.5L4.5,10.5L6.5,12.5H0.5Z" fill="#000" />
              </svg>
            </ExpandButton>
          </ChartHeader>
          <SpeedChart share={end / 1000} />
          <RangeSlider>
            <RangeTrack
              style={{
                background: `linear-gradient(to right, #ccc ${start / 10}%, #555 ${start / 10}%, #555 ${end / 10}%, #ccc ${end / 10}%)`,
              }}
            />
            <RangeInput type="range" min="0" max="1000" value={start} aria-label="Začátek oříznutí" onChange={(e) => setStart(Math.min(Number(e.target.value), end))} />
            <RangeInput type="range" min="0" max="1000" value={end} aria-label="Konec oříznutí" $active onChange={(e) => setEnd(Math.max(Number(e.target.value), start))} />
          </RangeSlider>
        </section>

        <Aside>
          <h2>Oříznout aktivitu</h2>
          <p>
            Pokud jste na svém zařízení Garmin zahájili aktivitu příliš brzy nebo ji ukončili moc pozdě, nevadí. Oříznutí
            aktivity vám umožňuje odebrat nechtěné části za účelem přesnějšího přehledu o vašem celkovém výkonu.
          </p>
          <a href="#info">Více informací</a>
        </Aside>
      </Body>
    </Page>
  );
}
